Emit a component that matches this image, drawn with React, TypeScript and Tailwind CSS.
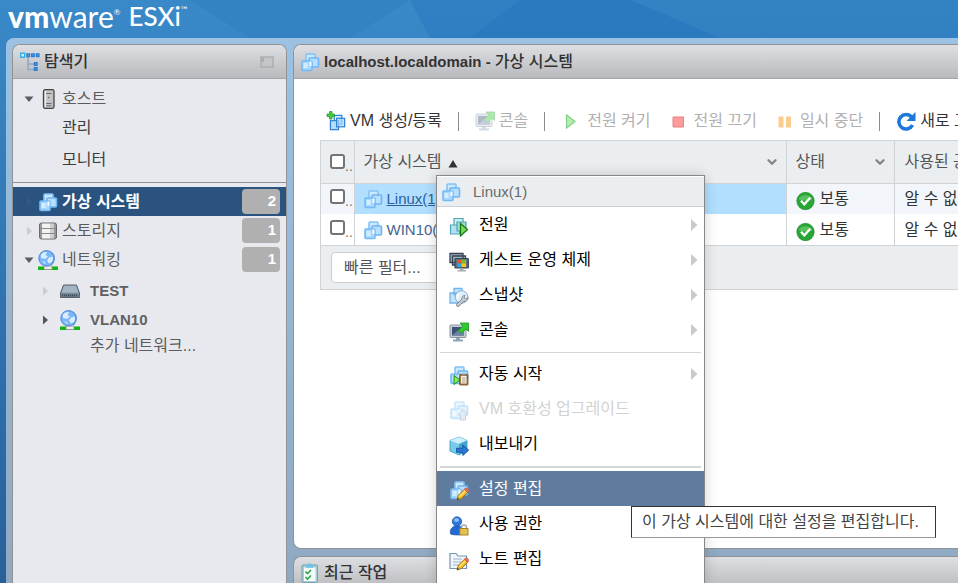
import { useState } from "react";
import type { ReactNode } from "react";
import clsx from "clsx";
import { ChevronDown } from "lucide-react";

/* ---------- icons ---------- */

function VmShape() {
  return (
    <>
      <rect x="5" y="1" width="9" height="9.500" rx="1" fill="#cbe8ff" stroke="#82c2f7" strokeWidth="1.600" />
      <rect x="8" y="5" width="9.500" height="9" rx="1" fill="#b9e0ff" stroke="#6db5f4" strokeWidth="1.600" />
      <rect x="1" y="8" width="10" height="9.500" rx="1" fill="#a9d8ff" stroke="#74b9f5" strokeWidth="1.600" />
      <path d="M8.500 8.500h2v4.500h-2z" fill="#f1faff" />
      <path d="M2.500 10h4v5h-4z" fill="#d5eeff" />
    </>
  );
}

function Pencil() {
  return (
    <>
      <path d="M8 19l1.300-4.600 6.200-6.200 3.200 3.100-6.300 6.200z" fill="#f8bd22" stroke="#9a6a10" strokeWidth="0.900" />
      <path d="M10.500 15.600l6-6" stroke="#ffe687" strokeWidth="1.200" />
      <path d="M15.500 8.200l1.200-1.200c1-.8 3.800 1.700 3 3l-1.100 1.200z" fill="#ef6a67" stroke="#c25450" strokeWidth="0.700" />
      <path d="M8 19l.7-2.200 1.500 1.500z" fill="#333" />
    </>
  );
}

function MonitorShape() {
  return (
    <>
      <rect x="1" y="3" width="16" height="12.500" rx="1" fill="#c6cfd8" stroke="#8995a1" />
      <rect x="3" y="5" width="12" height="8.500" fill="#3d5475" />
      <path d="M3 13.500l10-8.500h2v8.500z" fill="#6b86a5" />
      <path d="M7 16h4v1.500h3V19.500H4v-2h3z" fill="#8fa5b9" />
      <path d="M11 1h8.500v8.500l-2.600-2.600-4.500 4.500-2.900-2.900 4.400-4.600z" fill="#2fca32" stroke="#149417" strokeWidth="0.800" />
    </>
  );
}

const drawings = {
  vm: <g transform="translate(1 1)"><VmShape /></g>,
  vmAdd: (
    <>
      <g transform="translate(3 3) scale(.95)">
        <rect x="5.500" y="1.500" width="8" height="9" fill="#d9efff" stroke="#2f84d6" strokeWidth="1.300" />
        <rect x="1.500" y="7" width="8.500" height="9.500" fill="#b5defc" stroke="#2f84d6" strokeWidth="1.300" />
        <rect x="8" y="4.500" width="8.500" height="9" fill="#a9d8fb" fillOpacity="0.700" stroke="#2f84d6" strokeWidth="1.300" />
      </g>
      <path d="M3.500.5h2.500v2.500H8.500v2.500H6V8H3.500V5.500H1V3h2.500z" fill="#45cb45" stroke="#2a9a2e" strokeWidth="0.800" />
    </>
  ),
  console: <MonitorShape />,
  power: (
    <>
      <g fill="#d3edf5" stroke="#4da6b5" strokeWidth="1.200">
        <path d="M5 1.500h9v7H5z" /><path d="M1.500 8h9v9h-9z" fill="#b4e1f2" /><path d="M8 5h9v9H8z" fill="#9edbc8" />
      </g>
      <path d="M11.500 6.500l7 6-7 6.500z" fill="#7bdc52" stroke="#16751a" strokeWidth="1.200" />
    </>
  ),
  guest: (
    <>
      <path d="M1 1.500h13v9H1zM3.500 4h13v9h-13z" fill="#9fb5c6" stroke="#34424f" strokeWidth="1.300" />
      <rect x="6" y="6.500" width="13.300" height="9.500" rx="0.500" fill="#607383" stroke="#34424f" strokeWidth="1.200" />
      <path d="M8.500 7.800h4v3.600h-4z" fill="#ef5326" /><path d="M12.500 7.800h4.500v3.600h-4.500z" fill="#83bd22" />
      <path d="M8.500 11.400h4v3.600h-4z" fill="#2ea6ec" /><path d="M12.500 11.400h4.500v3.600h-4.500z" fill="#fbc51b" />
      <path d="M11 16.500h3.500V18H17v1.500H8.500V18H11z" fill="#a5adb3" />
    </>
  ),
  snapshot: (
    <>
      <path d="M5 1.500h8v6H5zM1 6h8v10H1z" fill="#c3e4fc" stroke="#72b4ee" strokeWidth="1.300" />
      <circle cx="12.500" cy="10" r="6.300" fill="#e1effc" stroke="#88add6" />
      <path d="M10 6.500a4.500 4.500 0 0 0-1.500 5" stroke="#fff" strokeWidth="1.500" fill="none" />
      <path d="M9 18l5.500-5.500" stroke="#757f88" strokeWidth="3.600" strokeLinecap="round" />
      <path d="M13 12.500c-.6-2.500 1-4.300 3-4.200l-1 2.500 2 1.200 2.200-1.600c.3 2.300-2 4.600-4.400 4z" fill="#c5ccd2" stroke="#757f88" strokeWidth="0.800" />
      <path d="M9 18l5.500-5.500" stroke="#ccd2d7" strokeWidth="2" strokeLinecap="round" />
    </>
  ),
  autostart: (
    <>
      <g transform="translate(1 0)"><VmShape /></g>
      <path d="M5 9.500l6 4.500-6 4.500z" fill="#83e85c" stroke="#1d9125" />
      <rect x="10.500" y="8.500" width="8.500" height="10.500" rx="0.800" fill="#a6763c" stroke="#70491b" strokeWidth="0.800" />
      <path d="M12 10h5.500v7.500H12z" fill="#f1efe6" />
      <path d="M13 12h3.500M13 14h3.500M13 16h3.500" stroke="#929292" strokeWidth="0.800" />
      <path d="M13 7.500h3.500v2H13z" fill="#8b9298" />
    </>
  ),
  upgrade: (
    <g opacity="0.400">
      <g transform="translate(1 0)"><VmShape /></g>
      <path d="M14 8.500l5 5.500h-2.500v5h-5v-5H9z" fill="#b3cee9" stroke="#7696bc" />
    </g>
  ),
  exportVm: (
    <>
      <path d="M10 1l8 3.500v10L10 19l-9-4V4.500z" fill="#78cbe8" stroke="#3ba2cc" strokeWidth="0.900" />
      <path d="M10 1l8 3.500L10 8 1 4.500z" fill="#ccf0fa" /><path d="M10 8l8-3.500v10L10 19z" fill="#46a4ce" />
      <path d="M7.500 12.200h6.300V9l6 5.200-6 5.300v-3.200H7.500z" fill="#2978d6" stroke="#0d529f" strokeWidth="0.800" />
    </>
  ),
  edit: <><g transform="translate(1 0)"><VmShape /></g><Pencil /></>,
  permission: (
    <>
      <path d="M1.500 18c-.8-4 1-7 4.500-8h4c3.500 1 5.300 4 4.500 8-4 1.300-9 1.300-13 0z" fill="#2469d4" stroke="#1950a5" strokeWidth="0.700" />
      <circle cx="8" cy="5.500" r="4.700" fill="#2f75de" stroke="#1950a5" strokeWidth="0.700" />
      <ellipse cx="7.500" cy="4" rx="2.600" ry="2" fill="#8abbf7" />
      <path d="M12.500 13v-1.500a2.500 2.500 0 0 1 5 0V13" fill="none" stroke="#a2a8ad" strokeWidth="1.400" />
      <rect x="10.800" y="12.500" width="8.200" height="6.500" fill="#e4c250" stroke="#a07d19" strokeWidth="0.900" />
    </>
  ),
  notes: (
    <>
      <path d="M1 17.500v-15h6l2 2.500h8.500v12.500z" fill="#f1f6fb" stroke="#7895b5" strokeWidth="1.200" />
      <path d="M4 8h9M4 11h8M4 14h6" stroke="#9db0c5" /><Pencil />
    </>
  ),
  host: (
    <>
      <rect x="5.500" y=".7" width="10.500" height="18.600" rx="1.500" fill="#c2c2c2" stroke="#444" strokeWidth="1.300" />
      <path d="M7.500 2v16" stroke="#ececec" strokeWidth="1.600" />
      <path d="M8 4.500h5.500M8 14.500h5.500M8 16.800h5.500" stroke="#6c6c6c" /><circle cx="10.700" cy="8.500" r=".8" fill="#666" />
    </>
  ),
  storage: (
    <>
      <rect x="1.500" y="2" width="17" height="16" rx="2" fill="#999" stroke="#6a6a6a" />
      <path d="M4 2.500h8v15H4z" fill="#f2f2f2" /><path d="M12 2.500h4v15h-4z" fill="#cfcfcf" />
      <path d="M2 7.500h16M2 12.500h16" stroke="#8b8b8b" />
    </>
  ),
  network: (
    <>
      <path d="M0 16.500h20V20H0z" fill="#12b312" /><path d="M6 16h8v3.500H6z" fill="#ececec" stroke="#8d8d8d" strokeWidth="0.700" />
      <circle cx="8.500" cy="8.300" r="7.700" fill="#7ab6f8" stroke="#4c88d6" />
      <path d="M3 4.500c2-2.500 5-3 6-2L7.500 5 10 6.500 7 9 3 8zM11 7.500l4-1c.6 4-1 6-4 7l-2-3zM4 11l3 1 .5 2.500z" fill="#d8edff" />
      <path d="M13 2c4 2.500 4.500 9 0 13" fill="none" stroke="#5c93dc" strokeWidth="1.200" />
    </>
  ),
  switch: (
    <>
      <path d="M3.500 4h13l3 8v4.500h-19V12z" fill="#788896" stroke="#56636f" />
      <path d="M4 4.800h12l2.500 7h-17z" fill="#a3b5c4" /><path d="M2 14.500h16" stroke="#3a4651" strokeWidth="1.800" strokeDasharray="1.200 .8" />
    </>
  ),
  tree: (
    <>
      <path d="M8 3v14.500h7M8 12h7" fill="none" stroke="#91a5bf" strokeWidth="1.500" />
      <path d="M.7 1.200h4v4h-4z" fill="#c6efff" stroke="#38aee4" strokeWidth="1.400" />
      <path d="M7 2h2.500v2.500H7zM11.700 2h2.500v2.500h-2.500zM16.400 2h2.500v2.500h-2.500zM14.500 10.700H17v2.500h-2.500zM14.500 15.700H17v2.500h-2.500z" fill="#5ca9f2" stroke="#2b7fd3" strokeWidth="1.400" />
    </>
  ),
  tasks: (
    <>
      <rect x="2" y="2" width="15.500" height="17.500" rx="1" fill="#a9cdd6" stroke="#7a9fac" />
      <path d="M4 4.500h11.500v13.500H4z" fill="#f4fbf8" /><path d="M6 1.800l3.700-1.500 3.700 1.500v3H6z" fill="#6fc4e5" />
      <path d="M5.500 8.500l2 2L11 7M5.500 14l2 2 3.500-3.500" fill="none" stroke="#2aa84a" strokeWidth="1.600" />
    </>
  ),
  play: <path d="M5.500 4l8.500 6.500L5.500 17z" fill="#b6ecae" stroke="#7ed287" strokeWidth="1.200" />,
  stop: <path d="M5 6h10.500v10H5z" fill="#fd9c9c" stroke="#e98080" />,
  pause: <path d="M4.500 5.500h5v11h-5zM12 5.500h5v11h-5z" fill="#fccb8f" />,
  refresh: (
    <>
      <path d="M16.500 14a7.200 7.200 0 1 1-1-8" fill="none" stroke="#1c79db" strokeWidth="3.600" />
      <path d="M19.500 1v9h-9z" fill="#1c79db" />
    </>
  ),
  ok: (
    <>
      <circle cx="9.500" cy="10" r="8.700" fill="#28a635" stroke="#168326" strokeWidth="0.600" />
      <path d="M2.500 8a7.500 6 0 0 1 14 0c-4 2-10 2-14 0z" fill="#58c15f" />
      <path d="M5 9.800l3.300 3.500 6-6.500" fill="none" stroke="#fff" strokeWidth="2.400" />
    </>
  ),
};

type IconName = keyof typeof drawings;

function Icon({ name, faded }: { name: IconName; faded?: boolean }) {
  return (
    <svg viewBox="0 0 20 20" aria-hidden="true" className={clsx("size-5 shrink-0", faded && "opacity-40")}>
      {drawings[name]}
    </svg>
  );
}

/* ---------- data ---------- */

type MenuItem = { icon: IconName; label: string; sub?: boolean; disabled?: boolean; active?: boolean };

const menuGroups: MenuItem[][] = [
  [
    { icon: "power", label: "전원", sub: true },
    { icon: "guest", label: "게스트 운영 체제", sub: true },
    { icon: "snapshot", label: "스냅샷", sub: true },
    { icon: "console", label: "콘솔", sub: true },
  ],
  [
    { icon: "autostart", label: "자동 시작", sub: true },
    { icon: "upgrade", label: "VM 호환성 업그레이드", disabled: true },
    { icon: "exportVm", label: "내보내기" },
  ],
  [
    { icon: "edit", label: "설정 편집", active: true },
    { icon: "permission", label: "사용 권한" },
    { icon: "notes", label: "노트 편집" },
  ],
];

const vms = ["Linux(1)", "WIN10(1)"];

/* ---------- sidebar ---------- */

type Arrow = "open" | "closed" | "faint" | "dim";

function TreeArrow({ kind }: { kind: Arrow }) {
  return (
    <svg viewBox="0 0 10 10" aria-hidden="true" className="size-2.5 shrink-0">
      {kind === "open" && <path d="M.5 2.500h9L5 8z" fill="#5d5d5d" />}
      {kind === "closed" && <path d="M3 .5v9L8 5z" fill="#555" />}
      {kind === "faint" && <path d="M3 .5v9L8 5z" fill="#cbccd0" />}
      {kind === "dim" && <path d="M3 .5v9L8 5z" fill="#345a85" />}
    </svg>
  );
}

function NavRow({ arrow, icon, label, count, active }: { arrow: Arrow; icon: IconName; label: string; count?: number; active?: boolean }) {
  return (
    <a
      href="#"
      className={clsx(
        "flex h-[29px] items-center gap-1 pl-[11px] pr-1.5",
        active ? "bg-[#2a537f] font-bold text-white" : "text-[#5c5c5c]",
      )}
    >
      <TreeArrow kind={arrow} />
      <Icon name={icon} />
      <span className="flex-1">{label}</span>
      {count !== undefined && (
        <span className="h-[25px] w-[38px] rounded bg-[#b0b0b0] pr-1 text-right text-[15px] leading-6 font-bold text-white">
          {count}
        </span>
      )}
    </a>
  );
}

function SubRow({ arrow, icon, label }: { arrow: Arrow; icon: IconName; label: string }) {
  return (
    <a href="#" className="flex h-[29px] items-center gap-2.5 pl-[27px] text-[15px] font-bold text-[#606060]">
      <TreeArrow kind={arrow} />
      <Icon name={icon} />
      {label}
    </a>
  );
}

function Sidebar() {
  return (
    <nav className="w-[275px] shrink-0 overflow-hidden rounded-t-lg border border-b-0 border-[#929292] bg-[#e8e9ee]">
      <div className="flex h-[34px] items-center gap-1 border-b border-[#a5a6aa] bg-linear-to-b from-[#dedfe2] to-[#b9babe] pr-3 pl-[7px] font-medium text-[#333]">
        <Icon name="tree" />
        <h2 className="flex-1">탐색기</h2>
        <button type="button" aria-label="접기">
          <svg viewBox="0 0 14 12" className="h-3 w-3.5">
            <path d="M1 1h12v10H1z" fill="#c5c6c9" stroke="#adaeb1" strokeWidth="1.500" />
            <path d="M1 1h3v5H1z" fill="#adaeb1" />
          </svg>
        </button>
      </div>
      <div className="pt-[5px]">
        <NavRow arrow="open" icon="host" label="호스트" />
        <a href="#" className="flex h-[29px] items-center pl-[49px] text-[#3c3c3c]">관리</a>
        <a href="#" className="flex h-[35px] items-center pl-[49px] text-[#3c3c3c]">모니터</a>
        <hr className="mt-[5px] mb-1 border-[#929292]" />
        <NavRow arrow="dim" icon="vm" label="가상 시스템" count={2} active />
        <NavRow arrow="faint" icon="storage" label="스토리지" count={1} />
        <NavRow arrow="open" icon="network" label="네트워킹" count={1} />
        <div className="pt-0.5">
          <SubRow arrow="faint" icon="switch" label="TEST" />
          <SubRow arrow="closed" icon="network" label="VLAN10" />
          <a href="#" className="flex h-6 items-center pl-[77px] text-[#5c5c5c]">추가 네트워크...</a>
        </div>
      </div>
    </nav>
  );
}

/* ---------- main panel ---------- */

function ToolButton({ icon, disabled, faded, children }: { icon: IconName; disabled?: boolean; faded?: boolean; children: ReactNode }) {
  return (
    <button
      type="button"
      disabled={disabled}
      className={clsx("flex shrink-0 items-center gap-1", disabled ? "text-[#b0b0b0]" : "text-[#333]")}
    >
      <Icon name={icon} faded={faded} />
      <span className={clsx(["play", "stop", "pause"].includes(icon) && "pl-0.5")}>{children}</span>
    </button>
  );
}

function Divider() {
  return <span className="h-[19px] w-px shrink-0 bg-[#8c8c8c]" />;
}

function Toolbar() {
  return (
    <div className="flex h-8 items-center gap-4 pl-1.5 whitespace-nowrap">
      <ToolButton icon="vmAdd">VM 생성/등록</ToolButton>
      <Divider />
      <ToolButton icon="console" disabled faded>콘솔</ToolButton>
      <Divider />
      <div className="flex gap-[17px]">
        <ToolButton icon="play" disabled>전원 켜기</ToolButton>
        <ToolButton icon="stop" disabled>전원 끄기</ToolButton>
        <ToolButton icon="pause" disabled>일시 중단</ToolButton>
      </div>
      <Divider />
      <ToolButton icon="refresh">새로 고침</ToolButton>
    </div>
  );
}

function CheckCell({ label }: { label: string }) {
  return (
    <div className="flex h-full items-center pl-[9px]">
      <input
        type="checkbox"
        aria-label={label}
        className="size-[15px] shrink-0 appearance-none rounded-[3px] border-2 border-[#747474] bg-white checked:bg-[#2a537f]"
      />
      <span className="shrink-0 pt-2 text-sm leading-4 text-[#777]">..</span>
    </div>
  );
}

function VmTable() {
  const [filter, setFilter] = useState("");

  return (
    <div className="overflow-hidden border border-r-0 border-[#d0d3d6] bg-[#eaeef1]">
      <table className="w-full min-w-[720px] table-fixed border-collapse text-left">
        <colgroup>
          <col className="w-[33px]" />
          <col className="w-[432px]" />
          <col className="w-[108px]" />
          <col />
        </colgroup>
        <thead>
          <tr className="h-[42px] border-b border-[#d0d3d6] text-[#555]">
            <th className="h-[42px] border-r border-[#d0d3d6] p-0 font-normal">
              <CheckCell label="모두 선택" />
            </th>
            <th className="border-r border-[#d0d3d6] p-0 font-normal">
              <span className="flex items-center pr-[7px] pl-[9px]">
                가상 시스템
                <svg viewBox="0 0 10 8" aria-hidden="true" className="mt-1 ml-1.5 h-2 w-2.5"><path d="M5 0l4.500 7.500h-9z" fill="#333" /></svg>
                <ChevronDown className="ml-auto size-3.5 text-[#858585]" strokeWidth={4} />
              </span>
            </th>
            <th className="border-r border-[#d0d3d6] p-0 font-normal">
              <span className="flex items-center justify-between pr-[7px] pl-[9px]">
                상태
                <ChevronDown className="size-3.5 text-[#858585]" strokeWidth={4} />
              </span>
            </th>
            <th className="p-0 pl-2.5 font-normal">사용된 공간</th>
          </tr>
        </thead>
        <tbody>
          {vms.map((name, i) => (
            <tr key={name} className={clsx("h-[31px] text-[#333]", i === 0 ? "bg-[#f2f6fb]" : "bg-white")}>
              <td className="h-[31px] border-r border-[#d0d3d6] p-0 pb-1"><CheckCell label={name} /></td>
              <td className={clsx("border-r border-[#d0d3d6] p-0", i === 0 && "bg-[#b2dfff]")}>
                <a
                  href="#"
                  className={clsx("flex items-center gap-1 pl-2 text-[15px]", i === 0 ? "text-[#2a5f9b] underline" : "text-[#44658f]")}
                >
                  <Icon name="vm" />
                  {name}
                </a>
              </td>
              <td className="border-r border-[#d0d3d6] p-0">
                <span className="flex items-center gap-1 pl-[9px]">
                  <span className="pt-1"><Icon name="ok" /></span>
                  보통
                </span>
              </td>
              <td className="p-0 pl-2.5">알 수 없음</td>
            </tr>
          ))}
        </tbody>
      </table>
      <div className="border-t border-[#d0d3d6] px-2.5 py-1.5">
        <input
          type="search"
          aria-label="빠른 필터"
          placeholder="빠른 필터..."
          value={filter}
          onChange={(e) => setFilter(e.target.value)}
          className="block h-[31px] w-48 rounded border border-[#cdcdcd] bg-white px-3 placeholder:text-[#555] placeholder:opacity-100"
        />
      </div>
    </div>
  );
}

/* ---------- overlays ---------- */

function ContextMenu() {
  return (
    <div role="menu" className="absolute top-[175px] left-[436px] w-[269px] border border-[#888] bg-white pt-px pb-2 shadow-[0_0_12px_rgba(0,0,0,0.18)]">
      <div className="flex h-[30px] items-center gap-3 border-b border-[#cdd0d3] bg-[#eaeef1] pl-1 text-[15px] text-[#6b6b6b]">
        <Icon name="vm" />
        Linux(1)
      </div>
      {menuGroups.map((group, g) => (
        <div key={g}>
          {g > 0 && <hr className={clsx("mx-[3px] mt-[5px] mb-[3px] border-[#d5d5d5]", g === 2 && "border-t-2")} />}
          {group.map((item) => (
            <button
              key={item.label}
              type="button"
              role="menuitem"
              disabled={item.disabled}
              className={clsx(
                "flex h-[35px] w-full items-center gap-2.5 pr-1.5 pl-3 text-left",
                item.active && "bg-[#5f7c9f] text-white",
                item.disabled && "text-[#d2d2d2]",
                !item.active && !item.disabled && "text-black",
              )}
            >
              <span className="pt-1"><Icon name={item.icon} /></span>
              <span className="flex-1">{item.label}</span>
              {item.sub && (
                <svg viewBox="0 0 7 12" aria-hidden="true" className="h-3 w-[7px]"><path d="M0 0v12l6.500-6z" fill="#c9c9c9" /></svg>
              )}
            </button>
          ))}
        </div>
      ))}
    </div>
  );
}

function Tooltip() {
  return (
    <div role="tooltip" className="absolute top-[506px] left-[631px] flex h-8 w-[305px] items-center border border-[#333] border-b-[#999] bg-white pl-2.5 whitespace-nowrap text-[#444]">
      이 가상 시스템에 대한 설정을 편집합니다.
    </div>
  );
}

function Header() {
  return (
    <header className="relative h-[38px] shrink-0">
      <svg viewBox="0 0 958 38" preserveAspectRatio="none" aria-hidden="true" className="absolute inset-0 size-full">
        <path d="M190 0h220l-60 38H250z" fill="#2373bd" fillOpacity="0.250" />
        <path d="M410 0h110l-50 38h-40z" fill="#2373bd" fillOpacity="0.400" />
        <path d="M520 0h110l90 38H470z" fill="#1d6cba" fillOpacity="0.500" />
        <path d="M630 0h328v38H720z" fill="#2373bd" fillOpacity="0.300" />
      </svg>
      <h1 className="relative flex h-8 items-center pl-2 font-['Lato',sans-serif] leading-9 text-white">
        <span className="text-[30px] font-black">vm</span>
        <span className="text-[30px]">ware</span>
        <span className="pb-2 text-[8px] leading-4">®</span>
        <span className="pl-2 text-[26px] font-medium">ESXi</span>
        <span className="pb-3 text-[9px] leading-4">™</span>
      </h1>
    </header>
  );
}

export default function App() {
  return (
    <div className="relative flex h-screen flex-col overflow-hidden bg-linear-to-b from-[#3989c8] to-[#29609a] font-['Liberation_Sans','Noto_Sans_CJK_KR',sans-serif] text-base leading-6">
      <Header />
      <div className="ml-1.5 flex min-h-0 flex-1 gap-1.5 rounded-tl-lg bg-linear-to-b from-[#9cc2e3] to-[#8fa9c1] pt-1.5 pl-1.5">
        <Sidebar />
        <div className="flex min-w-0 flex-1 flex-col gap-[7px]">
          <main className="min-h-0 flex-1 overflow-hidden rounded-l-lg border border-r-0 border-[#929292] bg-white">
            <div className="flex h-[34px] items-center gap-1 border-b border-[#a5a6aa] bg-linear-to-b from-[#dedfe2] to-[#b9babe] pl-1.5 text-[#333]">
              <Icon name="vm" />
              <h2 className="font-medium">
                <span className="text-[15px] font-bold">localhost.localdomain - </span>
                가상 시스템
              </h2>
            </div>
            <div className="pt-[26px] pl-[26px]">
              <Toolbar />
              <div className="pt-[3px]">
                <VmTable />
              </div>
            </div>
          </main>
          <section className="h-[27px] shrink-0 overflow-hidden rounded-tl-lg border border-r-0 border-b-0 border-[#929292]">
            <h2 className="flex h-8 items-center gap-1 bg-linear-to-b from-[#dedfe2] to-[#b9babe] pl-1.5 font-medium text-[#333]">
              <Icon name="tasks" />
              최근 작업
            </h2>
          </section>
        </div>
      </div>
      <ContextMenu />
      <Tooltip />
    </div>
  );
}
